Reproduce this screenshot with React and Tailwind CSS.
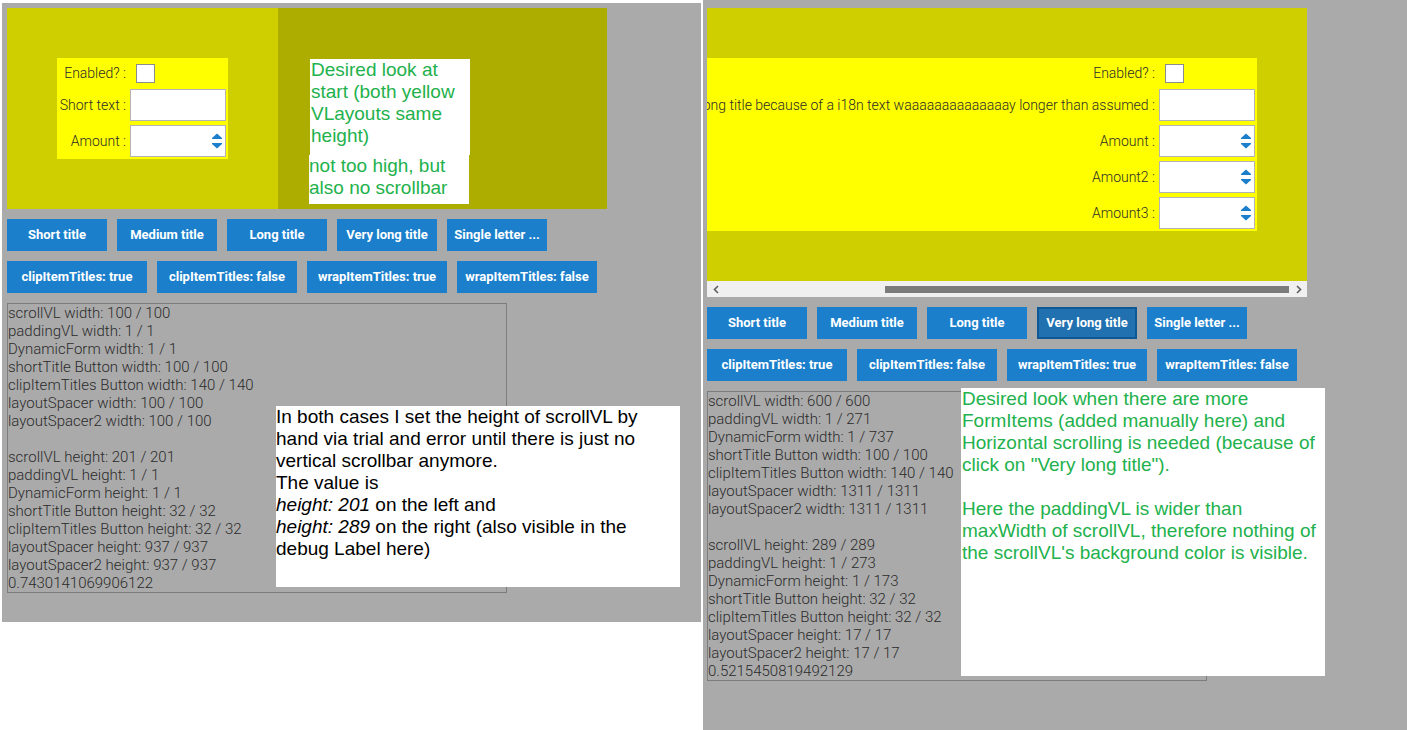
import { useState } from "react";

const sizeButtons = ["Short title", "Medium title", "Long title", "Very long title", "Single letter ..."];
const modeButtons = ["clipItemTitles: true", "clipItemTitles: false", "wrapItemTitles: true", "wrapItemTitles: false"];

const leftDebug = [
  "scrollVL width: 100 / 100",
  "paddingVL width: 1 / 1",
  "DynamicForm width: 1 / 1",
  "shortTitle Button width: 100 / 100",
  "clipItemTitles Button width: 140 / 140",
  "layoutSpacer width: 100 / 100",
  "layoutSpacer2 width: 100 / 100",
  "",
  "scrollVL height: 201 / 201",
  "paddingVL height: 1 / 1",
  "DynamicForm height: 1 / 1",
  "shortTitle Button height: 32 / 32",
  "clipItemTitles Button height: 32 / 32",
  "layoutSpacer height: 937 / 937",
  "layoutSpacer2 height: 937 / 937",
  "0.7430141069906122",
];

const rightDebug = [
  "scrollVL width: 600 / 600",
  "paddingVL width: 1 / 271",
  "DynamicForm width: 1 / 737",
  "shortTitle Button width: 100 / 100",
  "clipItemTitles Button width: 140 / 140",
  "layoutSpacer width: 1311 / 1311",
  "layoutSpacer2 width: 1311 / 1311",
  "",
  "scrollVL height: 289 / 289",
  "paddingVL height: 1 / 273",
  "DynamicForm height: 1 / 173",
  "shortTitle Button height: 32 / 32",
  "clipItemTitles Button height: 32 / 32",
  "layoutSpacer height: 17 / 17",
  "layoutSpacer2 height: 17 / 17",
  "0.5215450819492129",
];

const shortItems = [
  { label: "Short text :" },
  { label: "Amount :", spinner: true },
];

const longItems = [
  { label: "Very long title because of a i18n text waaaaaaaaaaaaaay longer than assumed :" },
  { label: "Amount :", spinner: true },
  { label: "Amount2 :", spinner: true },
  { label: "Amount3 :", spinner: true },
];

function Spinner() {
  return (
    <svg width="10" height="16" viewBox="0 0 10 16">
      <path d="M5 0.5 L10 5 V6 H0 V5 Z" fill="#1b7fcc" />
      <path d="M0 10 H10 V11 L5 15.5 L0 11 Z" fill="#1b7fcc" />
    </svg>
  );
}

function TestForm({ items, wide }) {
  const labelCls = wide
    ? "w-[639px] pr-[4px] text-right whitespace-nowrap"
    : "w-[73px] pr-[4px] text-right whitespace-nowrap";

  return (
    <div
      className={`flex flex-col bg-[#ffff00] pt-[2px] pb-[2px] pr-[2px] text-[14px] font-light text-[#2b2b2b] ${
        wide ? "w-[737px]" : "w-[171px]"
      }`}
    >
      <div className="flex h-[26px] items-center">
        <div className={labelCls}>Enabled? :</div>
        <span className="ml-[6px] h-[19px] w-[19px] border border-[#8c8c8c] bg-white" />
      </div>
      {items.map((item, i) => (
        <div
          key={item.label}
          className={`flex items-center ${i === 0 ? "mt-[3px]" : "mt-[4px]"}`}
        >
          <div className={labelCls}>{item.label}</div>
          <div className="flex h-[32px] w-[96px] items-center justify-end border border-[#b4b4b4] bg-white pr-[3px]">
            {item.spinner && <Spinner />}
          </div>
        </div>
      ))}
    </div>
  );
}

function ButtonRows({ selected }) {
  return (
    <>
      <div className="flex gap-[10px]">
        {sizeButtons.map((b) => (
          <button
            key={b}
            className={`h-[32px] w-[100px] text-[13px] font-bold text-white ${
              selected === b
                ? "border-2 border-[#0d5896] bg-[#2171b1]"
                : "bg-[#1b7fcc]"
            }`}
          >
            {b}
          </button>
        ))}
      </div>
      <div className="flex gap-[10px]">
        {modeButtons.map((b) => (
          <button
            key={b}
            className="h-[32px] w-[140px] bg-[#1b7fcc] text-[13px] font-bold text-white"
          >
            {b}
          </button>
        ))}
      </div>
    </>
  );
}

function DebugLabel({ lines }) {
  return (
    <div className="h-[290px] w-[500px] border border-[#7d7d7d] text-[15px] font-light leading-[18px] text-[#2b2b2b]">
      {lines.map((l, i) => (
        <div key={i} className="h-[18px] whitespace-nowrap">
          {l}
        </div>
      ))}
    </div>
  );
}

function Chevron({ dir }) {
  return (
    <svg width="6" height="9" viewBox="0 0 6 9">
      <path
        d={dir === "left" ? "M5 1 L1.5 4.5 L5 8" : "M1 1 L4.5 4.5 L1 8"}
        stroke="#5f5f5f"
        strokeWidth="1.6"
        fill="none"
      />
    </svg>
  );
}

export default function App() {
  const [selected] = useState("Very long title");

  return (
    <div className="flex h-[730px] w-[1407px] bg-white font-['Roboto',sans-serif]">
      {/* LEFT: start state */}
      <div className="relative ml-[2px] mt-[3px] flex h-[619px] w-[699px] flex-col gap-[10px] bg-[#aaaaaa] p-[5px]">
        <div className="flex h-[201px] w-[600px] bg-[#adad00]">
          <div className="w-[271px] bg-[#cfcf00] p-[50px]">
            <TestForm items={shortItems} />
          </div>
        </div>

        <ButtonRows />
        <DebugLabel lines={leftDebug} />

        <div className="absolute left-[308px] top-[56px] h-[96px] w-[160px] bg-white pl-[1px] font-['Liberation_Sans',Arial,sans-serif] text-[19px] leading-[22px] text-[#22b14c] whitespace-nowrap">
          Desired look at
          <br />
          start (both yellow
          <br />
          VLayouts same
          <br />
          height)
        </div>
        <div className="absolute left-[307px] top-[152px] h-[49px] w-[160px] bg-white font-['Liberation_Sans',Arial,sans-serif] text-[19px] leading-[22px] text-[#22b14c] whitespace-nowrap">
          not too high, but
          <br />
          also no scrollbar
        </div>

        <div className="absolute left-[274px] top-[403px] h-[181px] w-[404px] bg-white font-['Liberation_Sans',Arial,sans-serif] text-[19px] leading-[22px] text-black whitespace-nowrap">
          In both cases I set the height of scrollVL by
          <br />
          hand via trial and error until there is just no
          <br />
          vertical scrollbar anymore.
          <br />
          The value is
          <br />
          <i>height: 201</i> on the left and
          <br />
          <i>height: 289</i> on the right (also visible in the
          <br />
          debug Label here)
        </div>
      </div>

      {/* RIGHT: more items, horizontal scroll */}
      <div className="relative ml-[2px] flex h-[730px] w-[704px] flex-col gap-[10px] bg-[#aaaaaa] pl-[4px] pt-[8px]">
        <div className="flex w-[600px] flex-col">
          <div className="flex h-[273px] w-[600px] justify-end overflow-hidden">
            <div className="w-[837px] shrink-0 bg-[#cfcf00] p-[50px]">
              <TestForm items={longItems} wide />
            </div>
          </div>
          <div className="flex h-[16px] items-center bg-[#f0f0f0]">
            <div className="flex w-[17px] justify-center">
              <Chevron dir="left" />
            </div>
            <div className="flex flex-1 justify-end">
              <div className="mr-[1px] h-[7px] w-[404px] bg-[#7b7b7b]" />
            </div>
            <div className="flex w-[17px] justify-center">
              <Chevron dir="right" />
            </div>
          </div>
        </div>

        <ButtonRows selected={selected} />
        <DebugLabel lines={rightDebug} />

        <div className="absolute left-[258px] top-[388px] h-[288px] w-[364px] bg-white pl-[1px] font-['Liberation_Sans',Arial,sans-serif] text-[19px] leading-[22px] text-[#22b14c] whitespace-nowrap">
          Desired look when there are more
          <br />
          FormItems (added manually here) and
          <br />
          Horizontal scrolling is needed (because of
          <br />
          click on "Very long title").
          <br />
          <br />
          Here the paddingVL is wider than
          <br />
          maxWidth of scrollVL, therefore nothing of
          <br />
          the scrollVL's background color is visible.
        </div>
      </div>
    </div>
  );
}
